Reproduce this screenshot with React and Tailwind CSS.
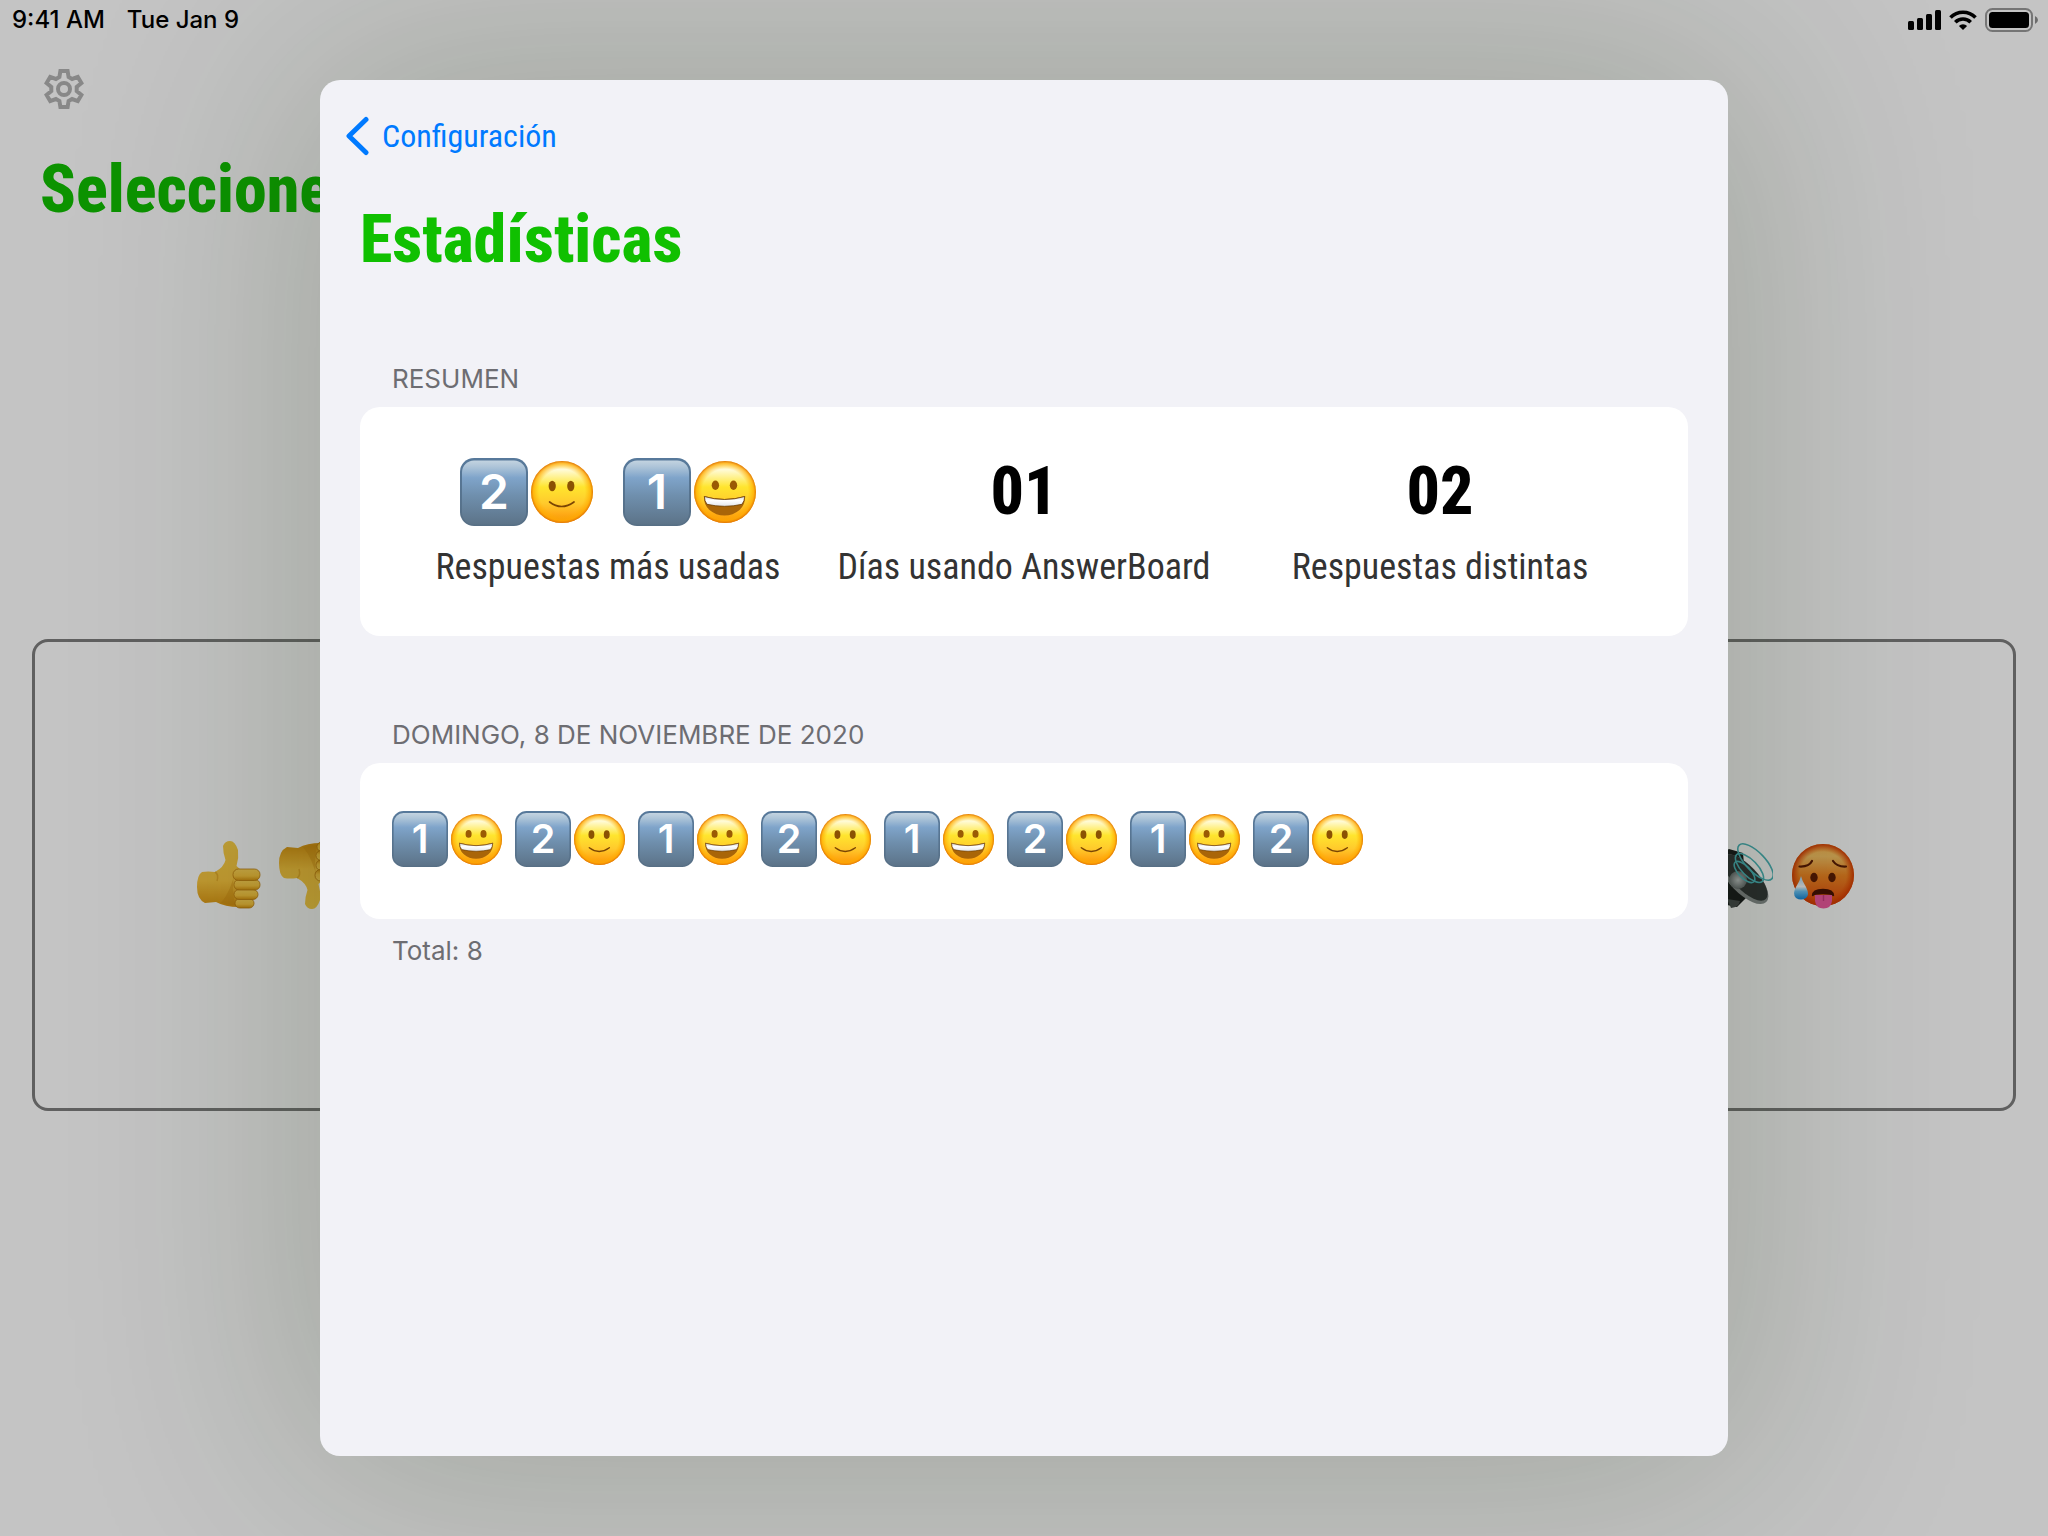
const condensed =
  "font-['Avenir_Next_Condensed','Roboto_Condensed','Open_Sans_Condensed','Liberation_Sans_Narrow','Lato',sans-serif]";

function EmojiDefs() {
  return (
    <svg className="absolute h-0 w-0" aria-hidden="true">
      <defs>
        <linearGradient id="key-fill" x1="0" y1="0" x2="0" y2="1">
          <stop offset="0" stopColor="#c3d3e0" />
          <stop offset="0.1" stopColor="#adc4d8" />
          <stop offset="0.27" stopColor="#7fa4ca" />
          <stop offset="0.55" stopColor="#6f8fad" />
          <stop offset="1" stopColor="#5c7388" />
        </linearGradient>
        <linearGradient id="key-edge" x1="0" y1="0" x2="0" y2="1">
          <stop offset="0" stopColor="#57799b" />
          <stop offset="1" stopColor="#576f85" />
        </linearGradient>
        <linearGradient id="face-fill" x1="0" y1="0" x2="0" y2="1">
          <stop offset="0" stopColor="#fff3a0" />
          <stop offset="0.14" stopColor="#fffbd8" />
          <stop offset="0.42" stopColor="#ffe52e" />
          <stop offset="0.68" stopColor="#ffca2c" />
          <stop offset="0.85" stopColor="#ffab17" />
          <stop offset="1" stopColor="#f58f0a" />
        </linearGradient>
        <radialGradient id="face-edge">
          <stop offset="0.74" stopColor="#ffb300" stopOpacity="0" />
          <stop offset="0.92" stopColor="#ffa800" stopOpacity="0.7" />
          <stop offset="1" stopColor="#e07505" />
        </radialGradient>
        <linearGradient id="teeth" x1="0" y1="0" x2="0" y2="1">
          <stop offset="0" stopColor="#d0d6de" />
          <stop offset="0.4" stopColor="#ffffff" />
          <stop offset="1" stopColor="#e3e6ec" />
        </linearGradient>
        <linearGradient id="hand" x1="0" y1="0" x2="0" y2="1">
          <stop offset="0" stopColor="#fcd049" />
          <stop offset="0.6" stopColor="#fcc840" />
          <stop offset="1" stopColor="#dd9612" />
        </linearGradient>
        <linearGradient id="finger" x1="0" y1="0" x2="0" y2="1">
          <stop offset="0" stopColor="#ffd658" />
          <stop offset="0.6" stopColor="#fcc840" />
          <stop offset="1" stopColor="#d8940f" />
        </linearGradient>
        <linearGradient id="hot-fill" x1="0" y1="0" x2="0" y2="1">
          <stop offset="0" stopColor="#fdb84f" />
          <stop offset="0.2" stopColor="#f9c466" />
          <stop offset="0.5" stopColor="#f48a25" />
          <stop offset="1" stopColor="#e8450a" />
        </linearGradient>
        <radialGradient id="hot-edge">
          <stop offset="0.75" stopColor="#e84a00" stopOpacity="0" />
          <stop offset="1" stopColor="#d93d05" />
        </radialGradient>
        <linearGradient id="drop" x1="0" y1="0" x2="0" y2="1">
          <stop offset="0" stopColor="#9fd9ff" />
          <stop offset="0.45" stopColor="#ffffff" />
          <stop offset="0.65" stopColor="#6fc7fb" />
          <stop offset="1" stopColor="#1387dd" />
        </linearGradient>
        <radialGradient id="cone">
          <stop offset="0" stopColor="#c3c8ca" />
          <stop offset="1" stopColor="#6b7274" />
        </radialGradient>
      </defs>
    </svg>
  );
}

function Keycap({ digit, className }) {
  return (
    <svg viewBox="0 0 68 68" className={className} role="img" aria-label={`Tecla ${digit}`}>
      <rect x="0" y="0" width="68" height="68" rx="14" fill="url(#key-edge)" />
      <rect x="2" y="2.5" width="64" height="64" rx="12" fill="url(#key-fill)" />
      <text
        x="34"
        y="50.5"
        textAnchor="middle"
        fill="#ffffff"
        fontSize="48"
        fontWeight="600"
        fontFamily="Inter, sans-serif"
      >
        {digit}
      </text>
    </svg>
  );
}

function Smile({ className }) {
  return (
    <svg viewBox="0 0 62 62" className={className} role="img" aria-label="Cara sonriente">
      <circle cx="31" cy="31" r="31" fill="url(#face-fill)" />
      <circle cx="31" cy="31" r="31" fill="url(#face-edge)" />
      <ellipse cx="21.2" cy="25" rx="3.6" ry="5.3" fill="#8b5203" />
      <ellipse cx="39.8" cy="25" rx="3.6" ry="5.3" fill="#8b5203" />
      <path d="M18.6 41 Q30.5 50 43 41" fill="none" stroke="#7a4504" strokeWidth="1.7" strokeLinecap="round" />
    </svg>
  );
}

function Grin({ className }) {
  return (
    <svg viewBox="0 0 62 62" className={className} role="img" aria-label="Cara muy feliz">
      <circle cx="31" cy="31" r="31" fill="url(#face-fill)" />
      <circle cx="31" cy="31" r="31" fill="url(#face-edge)" />
      <ellipse cx="21.4" cy="24.2" rx="3.7" ry="4.7" fill="#9a5b04" />
      <ellipse cx="39.5" cy="24.2" rx="3.7" ry="4.7" fill="#9a5b04" />
      <path d="M10 35 Q30.5 41 51 35 Q51.5 44 45.5 49 Q39 54.5 30.5 54.5 Q22 54.5 15.5 49 Q9.5 44 10 35 Z" fill="#a96508" />
      <path d="M10.3 35.5 Q30.5 41.5 50.8 35.5 Q50.5 40 48 43.3 Q30.5 47.3 13 43.3 Q10.5 40 10.3 35.5 Z" fill="url(#teeth)" stroke="#6b3d03" strokeWidth="0.8" />
    </svg>
  );
}

function Thumb({ down = false }) {
  return (
    <svg viewBox="0 0 64 68" className="h-[68px] w-16 shrink-0" role="img" aria-label={down ? "Pulgar abajo" : "Pulgar arriba"}>
      <g transform={down ? "matrix(1 0 0 -1 0 68)" : undefined}>
        <path
          d="M5 31 Q11 30 18 31 Q27 26 28.5 19 Q26 12 26 5 Q28 0 33 0 Q38 0 41 9 Q42 17 39.5 25 L44 29 L52 60 Q50 66 42 66 Q28 66 19 61 L8 62 Q0 58 0 46 Q0 34 5 31 Z"
          fill="url(#hand)"
        />
        <path d="M38 30 Q34 45 38 64 Q30 64 24 62 Q34 50 38 30 Z" fill="#d08c12" opacity="0.4" />
        <path d="M18 31 Q22 33 20 40" fill="none" stroke="#d99a1c" strokeWidth="1.5" opacity="0.6" />
        <g fill="url(#finger)" stroke="#c07d0f" strokeWidth="0.8">
          <rect x="38" y="57.5" width="19" height="9.5" rx="4.7" />
          <rect x="37" y="48.5" width="24" height="10" rx="5" />
          <rect x="37" y="38.5" width="26" height="10.5" rx="5" />
          <rect x="36" y="28" width="27" height="11.5" rx="5.5" />
        </g>
      </g>
    </svg>
  );
}

function Speaker() {
  return (
    <svg viewBox="0 0 64 68" className="h-[68px] w-16 shrink-0" role="img" aria-label="Altavoz">
      <path d="M2 18 L20 8 L34 12 L38 56 L28 66 L8 62 Z" fill="#1c1f20" />
      <path d="M18 58 L31 60 Q30 66 22 67 Z" fill="#4a4e50" />
      <ellipse cx="35" cy="38" rx="32" ry="14" transform="rotate(46 35 38)" fill="#8b9091" />
      <ellipse cx="36" cy="36.5" rx="30" ry="12" transform="rotate(46 36 36.5)" fill="#34393a" />
      <circle cx="29" cy="39" r="9" fill="url(#cone)" />
      <g fill="none" stroke="#4db8bd" strokeWidth="1.6">
        <ellipse cx="46.5" cy="21" rx="23.5" ry="9.5" transform="rotate(46 46.5 21)" />
        <ellipse cx="40.5" cy="27" rx="18.5" ry="8" transform="rotate(46 40.5 27)" />
        <ellipse cx="35.5" cy="31" rx="13.5" ry="6" transform="rotate(46 35.5 31)" />
      </g>
    </svg>
  );
}

function HotFace() {
  return (
    <svg viewBox="0 0 64 68" className="h-[68px] w-16 shrink-0" role="img" aria-label="Cara con calor">
      <g transform="translate(1 3)">
        <circle cx="31" cy="31" r="31" fill="url(#hot-fill)" />
        <circle cx="31" cy="31" r="31" fill="url(#hot-edge)" />
        <path d="M7.5 22.5 Q17 23 20 17 M41 17 Q45 23 54 22.5" fill="none" stroke="#5e1c05" strokeWidth="2.2" strokeLinecap="round" />
        <ellipse cx="22" cy="33.5" rx="3.7" ry="4.7" fill="#5e1c05" />
        <ellipse cx="40" cy="33.5" rx="3.7" ry="4.7" fill="#5e1c05" />
        <path d="M20.5 52 Q20.5 45.5 31 45.5 Q41.5 45.5 41.5 52 Q41 49.5 31 49.5 Q21 49.5 20.5 52 Z" fill="#4a1204" stroke="#4a1204" strokeWidth="1.5" />
        <path d="M23 51 L40 51 L40 57 Q39 64.5 31.5 64.5 Q24 64.5 23 57 Z" fill="#f25aa3" />
        <path d="M31.5 51 V57" stroke="#c93c80" strokeWidth="1.4" />
        <path d="M9 32 Q10 37 14 43 Q18 51 14 54 Q9 57 4 54 Q0 50 4 43 Q8 37 9 32 Z" fill="url(#drop)" />
      </g>
    </svg>
  );
}

function GearIcon() {
  return (
    <svg viewBox="-20 -20 40 40" className="h-10 w-10" fill="none" stroke="#b2b2b2" strokeWidth="4" aria-hidden="true">
      <path d="M-4.6 -12 L-3.6 -18 H3.6 L4.6 -12 L8.1 -10 L13.8 -12.1 L17.4 -5.9 L12.7 -2 V2 L17.4 5.9 L13.8 12.1 L8.1 10 L4.6 12 L3.6 18 H-3.6 L-4.6 12 L-8.1 10 L-13.8 12.1 L-17.4 5.9 L-12.7 2 V-2 L-17.4 -5.9 L-13.8 -12.1 L-8.1 -10 Z" />
      <circle r="6" />
    </svg>
  );
}

function StatusBar() {
  return (
    <header className="flex h-10 items-center justify-between pl-3 pr-[10px] font-['Inter',sans-serif] text-2xl font-medium text-black">
      <div className="flex gap-[22px]">
        <span>9:41 AM</span>
        <span>Tue Jan 9</span>
      </div>
      <div className="flex items-center gap-2" aria-hidden="true">
        <svg viewBox="0 0 33 20" className="h-5 w-[33px]">
          <rect x="0" y="11" width="6" height="9" rx="1.5" />
          <rect x="9" y="8" width="6" height="12" rx="1.5" />
          <rect x="18" y="4" width="6" height="16" rx="1.5" />
          <rect x="27" y="0" width="6" height="20" rx="1.5" />
        </svg>
        <svg viewBox="0 0 28 20" className="h-5 w-7" fill="none" stroke="#000" strokeWidth="3.6">
          <path d="M1.5 7.5 A17.5 17.5 0 0 1 26.5 7.5" />
          <path d="M6.3 12.3 A10.8 10.8 0 0 1 21.7 12.3" />
          <path d="M14 20 L9.9 15.9 A5.8 5.8 0 0 1 18.1 15.9 Z" fill="#000" stroke="none" />
        </svg>
        <svg viewBox="0 0 53 24" className="h-6 w-[53px]">
          <rect x="1" y="1" width="46" height="22" rx="6.5" fill="none" stroke="#000" strokeOpacity="0.4" strokeWidth="2" />
          <rect x="4" y="4" width="40" height="16" rx="3.5" />
          <path d="M50 8 Q53 9.5 53 12 Q53 14.5 50 16 Z" fillOpacity="0.45" />
        </svg>
      </div>
    </header>
  );
}

function BoardPage() {
  return (
    <main className="flex min-h-screen flex-col bg-white">
      <StatusBar />
      <div className="px-10 pt-7">
        <button type="button" aria-label="Configuración" className="flex h-[42px] w-12 items-center justify-center">
          <GearIcon />
        </button>
        <h1 className={`mt-10 text-[66px] font-extrabold leading-20 text-[#10c000] ${condensed}`}>Seleccione</h1>
      </div>
      <div className="flex flex-1 items-center px-8 pb-4">
        <button
          type="button"
          className="flex h-[472px] w-full items-center justify-between rounded-2xl border-3 border-[#7d7d7d] pr-[158px] pl-[162px]"
        >
          <span className="flex gap-[18px]">
            <Thumb />
            <Thumb down />
          </span>
          <span className="flex gap-[18px]">
            <Speaker />
            <HotFace />
          </span>
        </button>
      </div>
    </main>
  );
}

function SectionLabel({ children }) {
  return <h2 className="px-8 pb-3 text-[26px] leading-8 text-[#6d6d72] uppercase">{children}</h2>;
}

function Stat({ label, children }) {
  return (
    <div className="flex flex-col items-center">
      <dd className={`order-1 flex h-[70px] items-center text-[66px] font-extrabold leading-none text-black ${condensed}`}>{children}</dd>
      <dt className={`order-2 mt-4 whitespace-nowrap text-[36px] leading-12 text-[#333333] ${condensed}`}>{label}</dt>
    </div>
  );
}

const history = [1, 2, 1, 2, 1, 2, 1, 2];

function StatsSheet() {
  return (
    <section
      role="dialog"
      aria-labelledby="stats-title"
      className="flex-1 rounded-[20px] bg-[#f2f2f7] px-10 pt-7 shadow-[0_0_240px_20px_rgba(20,44,0,0.2)]"
    >
      <button type="button" className={`-ml-4 flex h-14 items-center gap-3 text-[32px] text-[#007aff] ${condensed}`}>
        <svg viewBox="0 0 26 40" className="h-10 w-[26px]" fill="none" stroke="#007aff" strokeWidth="5" strokeLinecap="round" strokeLinejoin="round" aria-hidden="true">
          <path d="M22 3.5 L5 20 L22 36.5" />
        </svg>
        Configuración
      </button>
      <h1 id="stats-title" className={`mt-9 text-[66px] font-extrabold leading-20 text-[#10c000] ${condensed}`}>
        Estadísticas
      </h1>
      <div className="mt-[83px] font-['Inter',sans-serif]">
        <SectionLabel>Resumen</SectionLabel>
        <dl className="grid grid-cols-3 rounded-[20px] bg-white px-10 pt-[50px] pb-[45px]">
          <Stat label="Respuestas más usadas">
            <span className="flex gap-[30px]">
              <span className="flex items-center gap-[3px]">
                <Keycap digit="2" className="h-[68px] w-[68px]" />
                <Smile className="h-[62px] w-[62px]" />
              </span>
              <span className="flex items-center gap-[3px]">
                <Keycap digit="1" className="h-[68px] w-[68px]" />
                <Grin className="h-[62px] w-[62px]" />
              </span>
            </span>
          </Stat>
          <Stat label="Días usando AnswerBoard">01</Stat>
          <Stat label="Respuestas distintas">02</Stat>
        </dl>
      </div>
      <div className="mt-[83px] font-['Inter',sans-serif]">
        <SectionLabel>domingo, 8 de noviembre de 2020</SectionLabel>
        <div className="flex flex-wrap gap-[13px] rounded-[20px] bg-white px-8 pt-12 pb-13">
          {history.map((digit, index) => (
            <span key={index} className="flex items-center gap-[3px]">
              <Keycap digit={digit} className="h-14 w-14" />
              {digit === 1 ? <Grin className="h-[51px] w-[51px]" /> : <Smile className="h-[51px] w-[51px]" />}
            </span>
          ))}
        </div>
        <p className="px-8 pt-4 text-[26px] leading-8 text-[#6d6d72]">Total: 8</p>
      </div>
    </section>
  );
}

export default function App() {
  return (
    <div className="relative min-h-screen overflow-hidden">
      <EmojiDefs />
      <BoardPage />
      <div className="absolute inset-0 flex bg-black/23 px-80 py-20">
        <StatsSheet />
      </div>
    </div>
  );
}
